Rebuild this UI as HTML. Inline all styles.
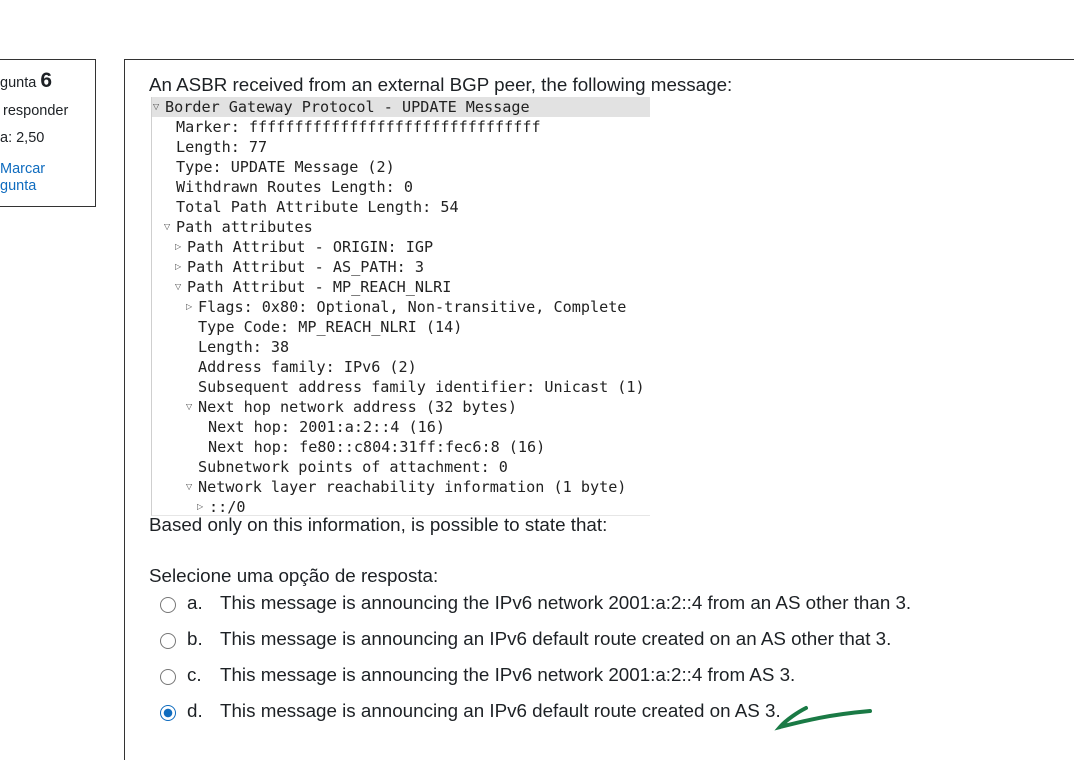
<!DOCTYPE html>
<html><head><meta charset="utf-8"><style>
body{margin:0;width:1074px;height:730px;background:#fff;position:relative;overflow:hidden;font-family:"Liberation Sans",Arial,sans-serif;color:#1d2125}
.abs{position:absolute;white-space:nowrap}
.lbox{position:absolute;left:-2px;top:59px;width:96px;height:146px;border:1px solid #333;}
.main{position:absolute;left:124px;top:59px;width:960px;height:700px;border-left:1px solid #333;border-top:1px solid #333}
.code{position:absolute;left:151px;top:97px;width:498px;height:418px;border-left:1px solid #cfcfcf;border-bottom:1px solid #e6e6e6}
.hdr{position:absolute;left:151px;top:97px;width:499px;height:20px;background:#e2e2e2}
.m{position:absolute;font-family:"DejaVu Sans Mono","Liberation Mono",monospace;font-size:15.15px;line-height:20px;color:#222;white-space:nowrap}
.ar{position:absolute;font-size:8px;color:#444;font-family:"DejaVu Sans",sans-serif}
.t{font-size:18.8px}
.radio{position:absolute;left:160px;width:16px;height:16px;border:1px solid #777;border-radius:50%;box-sizing:border-box}
.opt{position:absolute;left:220px;font-size:18.8px;white-space:nowrap}
.let{position:absolute;left:187px;font-size:18.8px}
</style></head><body>
<div class="lbox"></div>
<div class="abs" style="left:0;top:69px;font-size:14.5px">gunta <b style="font-size:21px">6</b></div>
<div class="abs" style="left:3px;top:103px;font-size:14.5px">responder</div>
<div class="abs" style="left:0;top:130px;font-size:14.5px">a: 2,50</div>
<div class="abs" style="left:0;top:161px;font-size:14.5px;color:#0f6cbf;line-height:17px">Marcar<br>gunta</div>
<div class="main"></div>
<div class="abs t" style="left:149px;top:74px">An ASBR received from an external BGP peer, the following message:</div>
<div class="hdr"></div>
<div class="code"></div>
<div class="abs t" style="left:149px;top:514px">Based only on this information, is possible to state that:</div>
<div class="abs t" style="left:149px;top:565px">Selecione uma opção de resposta:</div>
<div class="radio" style="top:597px"></div>
<div class="let" style="top:592px">a.</div><div class="opt" style="top:592px">This message is announcing the IPv6 network 2001:a:2::4 from an AS other than 3.</div>
<div class="radio" style="top:633px"></div>
<div class="let" style="top:628px">b.</div><div class="opt" style="top:628px">This message is announcing an IPv6 default route created on an AS other that 3.</div>
<div class="radio" style="top:669px"></div>
<div class="let" style="top:664px">c.</div><div class="opt" style="top:664px">This message is announcing the IPv6 network 2001:a:2::4 from AS 3.</div>
<div class="radio" style="top:705px;border-color:#0f6cbf;background:radial-gradient(circle,#0f6cbf 0 4px,#fff 4.5px)"></div>
<div class="let" style="top:700px">d.</div><div class="opt" style="top:700px">This message is announcing an IPv6 default route created on AS 3.</div>
<svg class="abs" style="left:770px;top:700px" width="110" height="32"><path d="M36 8 C28 12 16 20 10 27 C30 22 55 15 100 11" stroke="#1a7a45" stroke-width="4" fill="none" stroke-linecap="round"/></svg>
<div style="position:absolute;left:0;top:0">
<div class="m" style="left:153px;top:97px"><span class="ar" style="left:0;top:0">▽</span><span style="position:absolute;left:12px">Border&nbsp;Gateway&nbsp;Protocol&nbsp;-&nbsp;UPDATE&nbsp;Message</span></div>
<div class="m" style="left:176px;top:117px">Marker: ffffffffffffffffffffffffffffffff</div>
<div class="m" style="left:176px;top:137px">Length: 77</div>
<div class="m" style="left:176px;top:157px">Type: UPDATE Message (2)</div>
<div class="m" style="left:176px;top:177px">Withdrawn Routes Length: 0</div>
<div class="m" style="left:176px;top:197px">Total Path Attribute Length: 54</div>
<div class="m" style="left:176px;top:217px"><span class="ar" style="left:-12px">▽</span>Path attributes</div>
<div class="m" style="left:187px;top:237px"><span class="ar" style="left:-12px">▷</span>Path Attribut - ORIGIN: IGP</div>
<div class="m" style="left:187px;top:257px"><span class="ar" style="left:-12px">▷</span>Path Attribut - AS_PATH: 3</div>
<div class="m" style="left:187px;top:277px"><span class="ar" style="left:-12px">▽</span>Path Attribut - MP_REACH_NLRI</div>
<div class="m" style="left:198px;top:297px"><span class="ar" style="left:-12px">▷</span>Flags: 0x80: Optional, Non-transitive, Complete</div>
<div class="m" style="left:198px;top:317px">Type Code: MP_REACH_NLRI (14)</div>
<div class="m" style="left:198px;top:337px">Length: 38</div>
<div class="m" style="left:198px;top:357px">Address family: IPv6 (2)</div>
<div class="m" style="left:198px;top:377px">Subsequent address family identifier: Unicast (1)</div>
<div class="m" style="left:198px;top:397px"><span class="ar" style="left:-12px">▽</span>Next hop network address (32 bytes)</div>
<div class="m" style="left:208px;top:417px">Next hop: 2001:a:2::4 (16)</div>
<div class="m" style="left:208px;top:437px">Next hop: fe80::c804:31ff:fec6:8 (16)</div>
<div class="m" style="left:198px;top:457px">Subnetwork points of attachment: 0</div>
<div class="m" style="left:198px;top:477px"><span class="ar" style="left:-12px">▽</span>Network layer reachability information (1 byte)</div>
<div class="m" style="left:209px;top:497px"><span class="ar" style="left:-12px">▷</span>::/0</div>
</div>
</body></html>
